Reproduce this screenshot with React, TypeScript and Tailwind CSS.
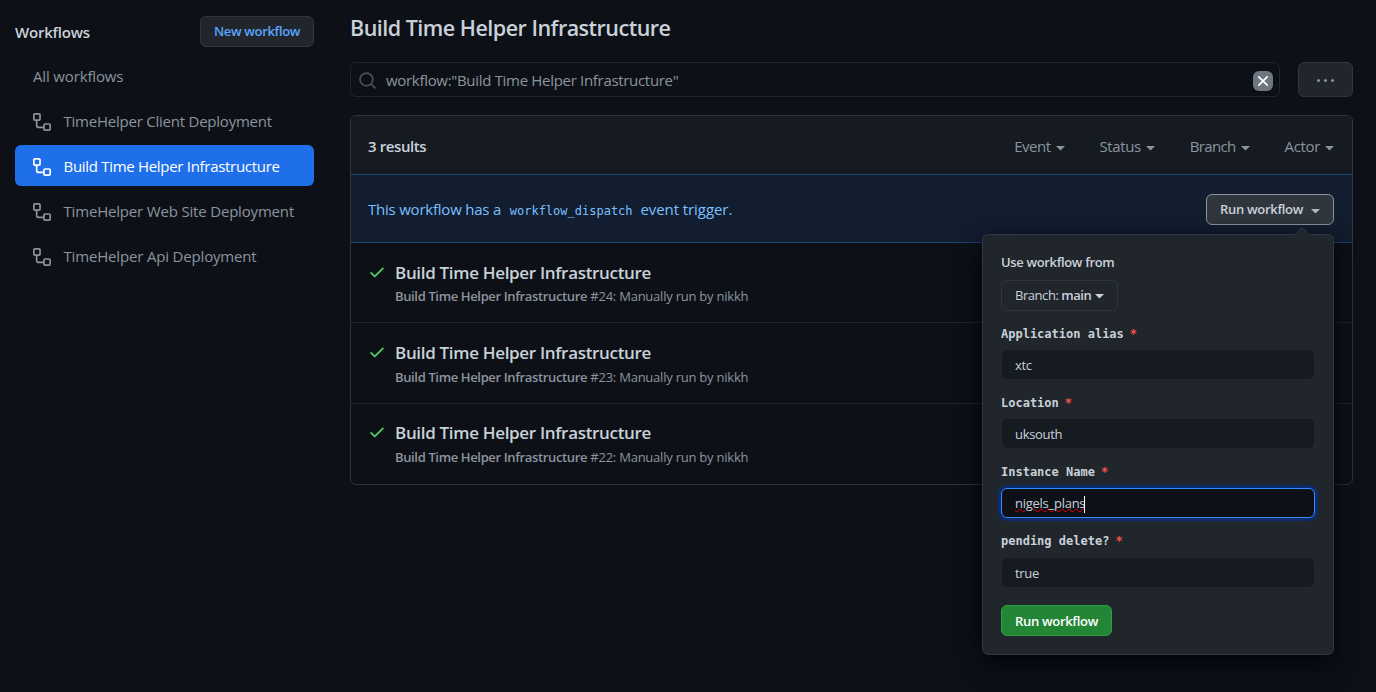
import React from "react";

const sans = "font-['Open_Sans','Noto_Sans',sans-serif]";

function WorkflowIcon({ className = "" }: { className?: string }) {
  return (
    <svg width="18" height="18" viewBox="0 0 16 16" fill="currentColor" className={className}>
      <path
        fillRule="evenodd"
        d="M0 1.75C0 .784.784 0 1.75 0h3.5C6.216 0 7 .784 7 1.75v3.5A1.75 1.75 0 015.25 7H4v4a1 1 0 001 1h4v-1.25C9 9.784 9.784 9 10.75 9h3.5c.966 0 1.75.784 1.75 1.75v3.5A1.75 1.75 0 0114.25 16h-3.5A1.75 1.75 0 019 14.25v-.75H5A2.5 2.5 0 012.5 11V7h-.75A1.75 1.75 0 010 5.25v-3.5zm1.75-.25a.25.25 0 00-.25.25v3.5c0 .138.112.25.25.25h3.5a.25.25 0 00.25-.25v-3.5a.25.25 0 00-.25-.25h-3.5zm9 9a.25.25 0 00-.25.25v3.5c0 .138.112.25.25.25h3.5a.25.25 0 00.25-.25v-3.5a.25.25 0 00-.25-.25h-3.5z"
      />
    </svg>
  );
}

function SearchIcon() {
  return (
    <svg
      width="17"
      height="17"
      viewBox="0 0 16 16"
      fill="none"
      stroke="#484f58"
      strokeWidth="1.6"
      strokeLinecap="round"
      className="mt-[2px] shrink-0"
    >
      <circle cx="7" cy="7" r="6" />
      <path d="M11.4 11.4L15 15" />
    </svg>
  );
}

function CheckIcon() {
  return (
    <svg width="18" height="18" viewBox="0 0 16 16" fill="#56d364" className="shrink-0">
      <path
        fillRule="evenodd"
        d="M13.78 4.22a.75.75 0 010 1.06l-7.25 7.25a.75.75 0 01-1.06 0L2.22 9.28a.75.75 0 011.06-1.06L6 10.94l6.72-6.72a.75.75 0 011.06 0z"
      />
    </svg>
  );
}

function Caret({ className = "" }: { className?: string }) {
  return (
    <svg width="9" height="5" viewBox="0 0 9 5" fill="currentColor" className={"shrink-0 " + className}>
      <path d="M0 0h9L4.5 4.5z" />
    </svg>
  );
}

const workflows = [
  { name: "TimeHelper Client Deployment", active: false, spacing: "tracking-[-0.23px]" },
  { name: "Build Time Helper Infrastructure", active: true, spacing: "tracking-[-0.3px]" },
  { name: "TimeHelper Web Site Deployment", active: false, spacing: "tracking-[-0.18px]" },
  { name: "TimeHelper Api Deployment", active: false, spacing: "tracking-[-0.17px]" },
];

function Sidebar() {
  return (
    <aside className="w-[299px] shrink-0 pt-4">
      <div className="flex h-[31px] items-center justify-between">
        <h2 className="text-[15px] font-semibold leading-[22px] tracking-[-0.22px] text-[#c9d1d9]">Workflows</h2>
        <button className="h-[31px] w-[114px] rounded-[6px] border border-[#30363d] bg-[#21262d] text-[13px] font-semibold tracking-[-0.33px] text-[#58a6ff]">
          New workflow
        </button>
      </div>
      <nav className="mt-[8px] flex flex-col gap-1 text-[15px] leading-[22px] text-[#8b949e]">
        <a className="flex h-[41px] items-center pl-[18px] tracking-[-0.15px]">All workflows</a>
        {workflows.map((w) => (
          <a
            key={w.name}
            className={
              w.active
                ? "flex h-[41px] items-center gap-[13px] rounded-[6px] bg-[#1f6feb] pl-[17.5px] text-white"
                : "flex h-[41px] items-center gap-[13px] rounded-[6px] pl-[17.5px]"
            }
          >
            <WorkflowIcon className="mt-[2px]" />
            <span className={w.spacing}>{w.name}</span>
          </a>
        ))}
      </nav>
    </aside>
  );
}

type FieldProps = { label: string; value: string; focused?: boolean; gap: string };

function Field({ label, value, focused = false, gap }: FieldProps) {
  return (
    <div className="h-[69px]">
      <div className="flex h-[20px] items-center gap-[6px] font-['DejaVu_Sans_Mono',monospace] text-[12px] font-bold text-[#c9d1d9]">
        <span>{label}</span>
        <span className="text-[#f85149]">*</span>
      </div>
      <div
        className={
          (focused
            ? "flex h-[30px] items-center rounded-[6px] border border-[#388bfd] bg-[#0d1117] px-[13px] pt-[2px] text-[13px] tracking-[-0.26px] text-[#c9d1d9] shadow-[0_0_0_3px_#0c2d6b] "
            : "flex h-[31px] items-center rounded-[6px] border border-[#21262d] bg-[#161b22] bg-clip-padding px-[13px] pt-[2px] text-[13px] tracking-[-0.3px] text-[#c9d1d9] ") + gap
        }
      >
        {focused ? (
          <span className="flex items-center">
            <span className="underline decoration-[#f00000] decoration-wavy decoration-1 underline-offset-0">{value}</span>
            <span className="-ml-px h-[17px] w-px bg-white" />
          </span>
        ) : (
          value
        )}
      </div>
    </div>
  );
}

function RunPopover() {
  return (
    <div className="absolute right-0 top-[40px] z-10 h-[421px] w-[352px] rounded-[6px] border border-[#30363d] bg-[#21262d] px-[18px] pt-[17px] shadow-[0_9px_27px_#010409]">
      <svg width="16" height="9" viewBox="0 0 16 9" className="absolute right-[23px] top-[-8px]">
        <path d="M0 8L8 0.5L16 8V9H0z" fill="#21262d" />
        <path d="M0 8L8 0.5L16 8" fill="none" stroke="#30363d" />
      </svg>
      <div className="text-[13px] font-semibold leading-[20px] tracking-[-0.35px] text-[#c9d1d9]">Use workflow from</div>
      <button className="mt-[8px] flex h-[31px] w-[117px] items-center rounded-[6px] border border-[#30363d] pl-[13px] text-[13px] text-[#c9d1d9]">
        <span className="tracking-[-0.45px]">
          Branch: <b className="font-semibold">main</b>
        </span>
        <Caret className="ml-1 mt-px" />
      </button>
      <div className="mt-[13px]">
        <Field label="Application alias" value="xtc" gap="mt-[5px]" />
        <Field label="Location" value="uksouth" gap="mt-[5px]" />
        <Field label="Instance Name" value="nigels_plans" focused gap="mt-[6px]" />
        <Field label="pending delete?" value="true" gap="mt-[6px]" />
      </div>
      <button className="mt-[5px] h-[31px] w-[111px] rounded-[6px] border border-[#2ea043] bg-[#238636] pt-[2px] text-[13px] font-semibold tracking-[-0.3px] text-white">
        Run workflow
      </button>
    </div>
  );
}

const filters = [
  { name: "Event", spacing: "tracking-[-0.5px]" },
  { name: "Status", spacing: "tracking-[-0.4px]" },
  { name: "Branch", spacing: "tracking-[-0.65px]" },
  { name: "Actor", spacing: "tracking-[-0.35px]" },
];

const runs = [
  { number: 24, row: "h-[79px] pt-[17px]", detail: "leading-[23px]" },
  { number: 23, row: "h-[81px] border-t pt-[17px]", detail: "leading-[25px]" },
  { number: 22, row: "h-[81px] border-t pt-[16px]", detail: "leading-[25px]" },
];

export default function App() {
  return (
    <div className={"flex h-[692px] w-[1376px] overflow-hidden whitespace-nowrap bg-[#0d1117] pl-[15px] pr-[23px] " + sans}>
      <Sidebar />
      <main className="ml-9 flex-1 pt-[11px]">
        <h1 className="h-[34px] text-[21.5px] font-semibold leading-[34px] tracking-[-0.51px] text-[#c9d1d9]">
          Build Time Helper Infrastructure
        </h1>
        <div className="mt-[17px] flex gap-[18px]">
          <div className="flex h-[35px] w-[930px] items-center rounded-[6px] border border-[#21262d] pl-2 pr-[6px] text-[15px] text-[#8b949e]">
            <SearchIcon />
            <span className="ml-[10px] flex-1 pt-[2px] tracking-[-0.31px]">workflow:"Build Time Helper Infrastructure"</span>
            <span className="mt-[3px] flex size-5 items-center justify-center rounded-[6px] bg-[#6e7681]">
              <svg width="12" height="12" viewBox="0 0 12 12" stroke="#fff" strokeWidth="1.7" strokeLinecap="round">
                <path d="M1.8 1.8l8.4 8.4M10.2 1.8l-8.4 8.4" />
              </svg>
            </span>
          </div>
          <button className="flex h-[35px] flex-1 items-center justify-center gap-1 rounded-[6px] border border-[#30363d] bg-[#21262d] pt-[2px]">
            <span className="size-[3px] rounded-full bg-[#8b949e]" />
            <span className="size-[3px] rounded-full bg-[#8b949e]" />
            <span className="size-[3px] rounded-full bg-[#8b949e]" />
          </button>
        </div>

        <section className="mt-[18px] rounded-[6px] border border-[#30363d]">
          <header className="flex h-[58px] items-center rounded-t-[5px] bg-[#161b22] pl-[17px] pr-[18px] pt-[2px] text-[15px] text-[#8b949e]">
            <span className="flex-1 font-semibold tracking-[-0.4px] text-[#c9d1d9]">3 results</span>
            <div className="flex gap-[35px]">
              {filters.map((f) => (
                <span key={f.name} className="flex items-center gap-[5px]">
                  <span className={f.spacing}>{f.name}</span>
                  <Caret className="mt-[4px]" />
                </span>
              ))}
            </div>
          </header>
          <div className="flex h-[69px] items-center justify-between border-y border-[#1e4273] bg-[#121d2f] pl-[17px] pr-[18px] pt-[2px]">
            <p className="text-[15px] text-[#79c0ff]">
              <span className="tracking-[-0.22px]">This workflow has a </span>
              <code className="ml-[5px] mr-1 font-['DejaVu_Sans_Mono',monospace] text-[12px]">workflow_dispatch</code>
              <span className="tracking-[-0.07px]"> event trigger.</span>
            </p>
            <div className="relative">
              <button className="flex h-[31px] w-[128px] items-center rounded-[6px] border border-[#8b949e] bg-[#30363d] pl-[13px] text-[13px] font-semibold text-[#c9d1d9]">
                <span className="tracking-[-0.3px]">Run workflow</span>
                <Caret className="ml-2 mt-[3px] text-[#b1bac4]" />
              </button>
              <RunPopover />
            </div>
          </div>
          {runs.map((r) => (
            <div key={r.number} className={"flex border-[#21262d] pl-[17px] " + r.row}>
              <div className="pt-[3px]">
                <CheckIcon />
              </div>
              <div className="ml-[9px]">
                <div className="text-[17px] font-semibold leading-[25px] tracking-[-0.32px] text-[#c9d1d9]">
                  Build Time Helper Infrastructure
                </div>
                <div className={"text-[13px] text-[#8b949e] " + r.detail}>
                  <b className="font-semibold tracking-[-0.36px]">Build Time Helper Infrastructure</b>
                  <span className="tracking-[-0.23px]"> #{r.number}: Manually run by nikkh</span>
                </div>
              </div>
            </div>
          ))}
        </section>
      </main>
    </div>
  );
}
